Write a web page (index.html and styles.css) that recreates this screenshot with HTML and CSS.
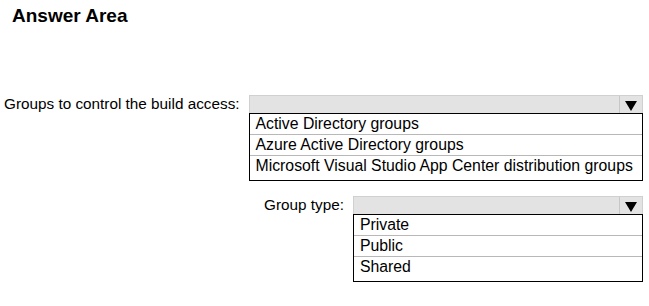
FILE: index.html
```html
<!DOCTYPE html>
<html lang="en">
<head>
    <meta charset="UTF-8">
    <title>Answer Area</title>
    <link rel="stylesheet" href="styles.css">
</head>
<body>
    <h1 class="title">Answer Area</h1>

    <div class="question first">
        <span class="label">Groups to control the build access:</span>
        <div class="dropdown wide">
            <div class="select">
                <span class="select-box"></span>
                <span class="arrow"></span>
            </div>
            <ul class="options">
                <li>Active Directory groups</li>
                <li>Azure Active Directory groups</li>
                <li>Microsoft Visual Studio App Center distribution groups</li>
            </ul>
        </div>
    </div>

    <div class="question second">
        <span class="label">Group type:</span>
        <div class="dropdown narrow">
            <div class="select">
                <span class="select-box"></span>
                <span class="arrow"></span>
            </div>
            <ul class="options">
                <li>Private</li>
                <li>Public</li>
                <li>Shared</li>
            </ul>
        </div>
    </div>
</body>
</html>
```

FILE: styles.css
```css
/* General Styles */
body {
    margin: 0;
    padding: 0;
    font-family: "Liberation Sans", Arial, sans-serif;
    font-size: 15.3px;
    color: #000;
    background: #fff;
}

.title {
    margin: 0;
    padding: 5px 0 0 12px;
    font-size: 19px;
    font-weight: bold;
    line-height: 22px;
}

/* Question rows */
.question {
    display: flex;
    align-items: flex-start;
}

.question.first {
    margin-top: 68px;
    padding-left: 4px;
}

.question.second {
    margin-top: 15px;
    padding-left: 264px;
}

.label {
    line-height: 18px;
    margin-right: 9px;
}

/* Dropdowns */
.dropdown {
    display: flex;
    flex-direction: column;
}

.dropdown.wide {
    width: 394px;
}

.dropdown.narrow {
    width: 290px;
}

.select {
    display: flex;
    height: 18px;
    background: #e3e3e3;
    border: 1px solid #d0d0d0;
    border-bottom: none;
    box-sizing: border-box;
}

.select-box {
    flex: 1;
}

.arrow {
    width: 22px;
    border-left: 1px solid #c8c8c8;
    position: relative;
}

.arrow::after {
    content: "";
    position: absolute;
    left: 5px;
    top: 5px;
    border-left: 6px solid transparent;
    border-right: 6px solid transparent;
    border-top: 10px solid #000;
}

.options {
    list-style: none;
    margin: 0;
    padding: 0 0 4px;
    border: 1px solid #000;
    font-size: 15.8px;
}

.options li {
    padding: 0 0 0 6px;
    line-height: 20px;
    white-space: nowrap;
    border-bottom: 1px solid #b8b8b8;
}

.options li:last-child {
    border-bottom: none;
}
```
